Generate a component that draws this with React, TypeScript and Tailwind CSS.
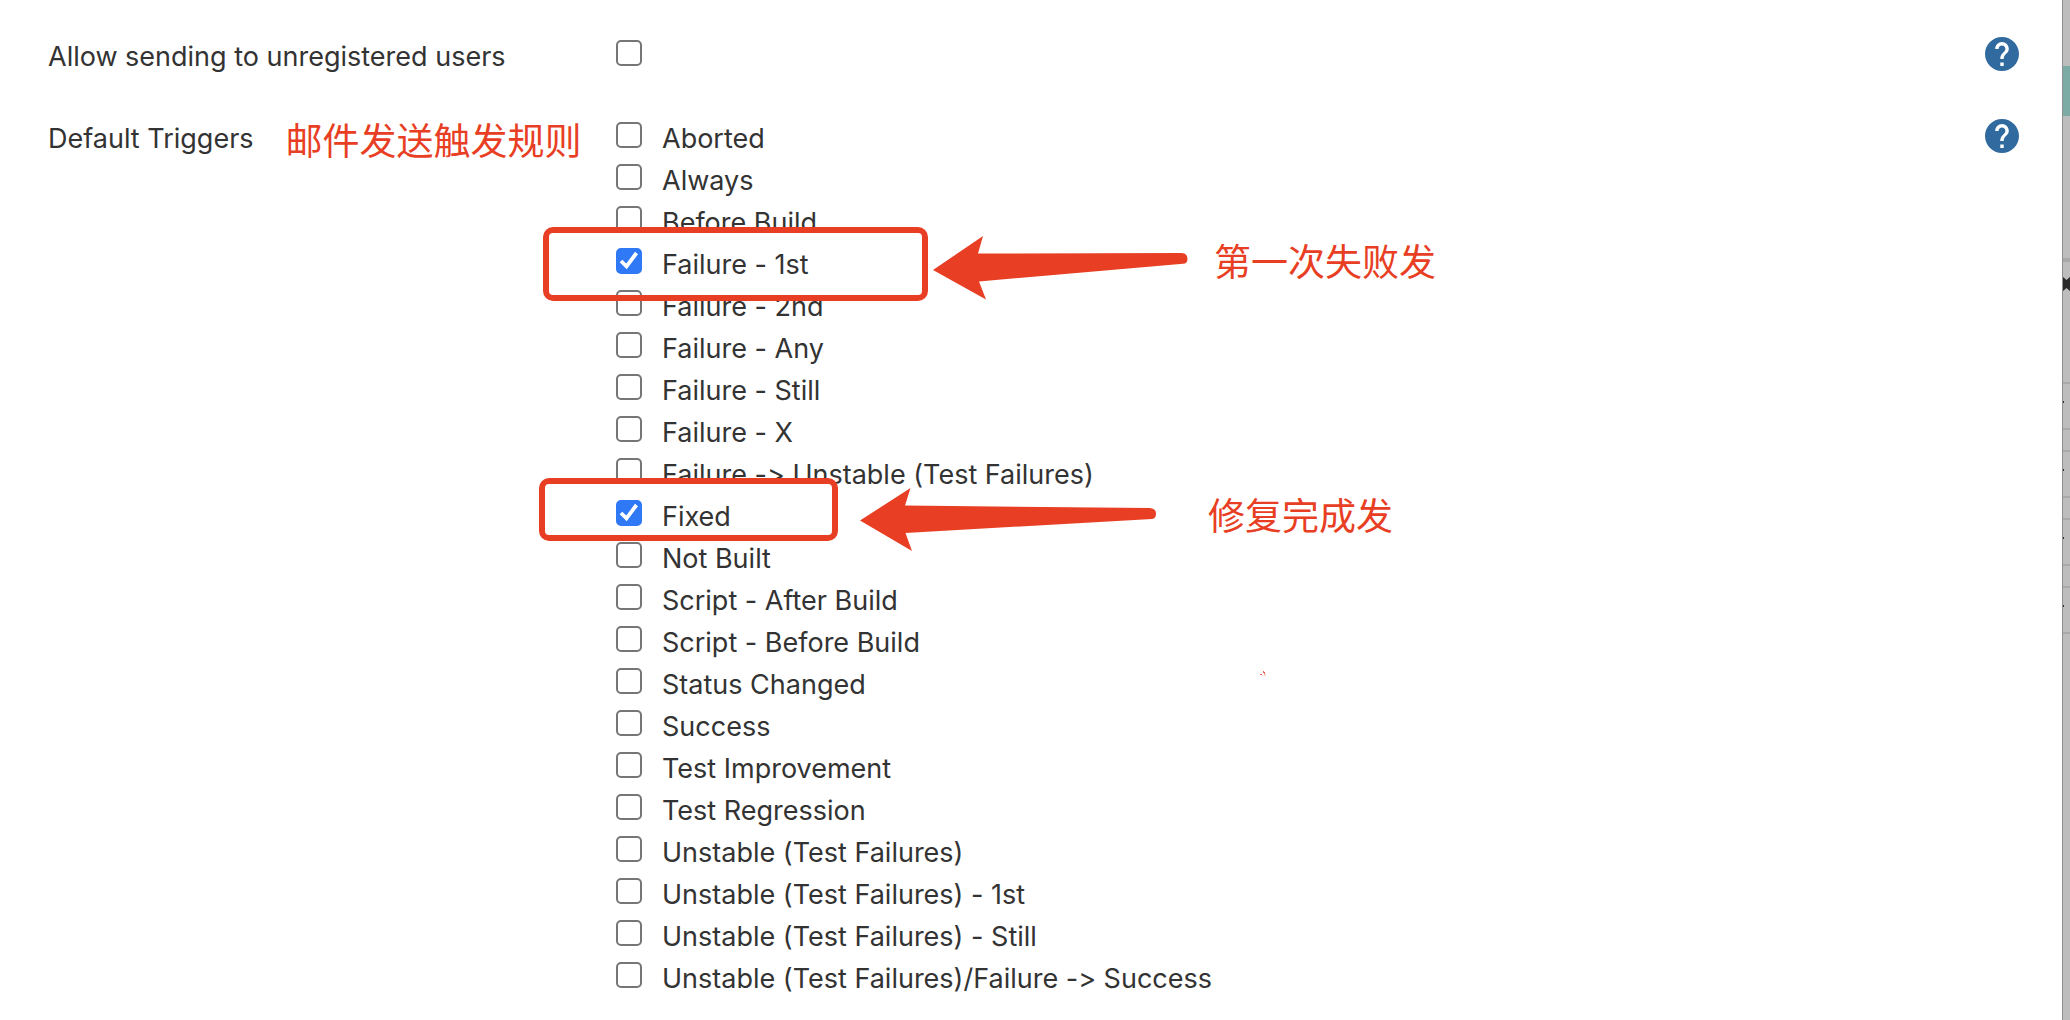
import React from "react";

type Callout = "first" | "fixed" | "speck";

const triggers: { name: string; checked?: boolean; callout?: Callout }[] = [
  { name: "Aborted" },
  { name: "Always" },
  { name: "Before Build" },
  { name: "Failure - 1st", checked: true, callout: "first" },
  { name: "Failure - 2nd" },
  { name: "Failure - Any" },
  { name: "Failure - Still" },
  { name: "Failure - X" },
  { name: "Failure -> Unstable (Test Failures)" },
  { name: "Fixed", checked: true, callout: "fixed" },
  { name: "Not Built" },
  { name: "Script - After Build" },
  { name: "Script - Before Build" },
  { name: "Status Changed", callout: "speck" },
  { name: "Success" },
  { name: "Test Improvement" },
  { name: "Test Regression" },
  { name: "Unstable (Test Failures)" },
  { name: "Unstable (Test Failures) - 1st" },
  { name: "Unstable (Test Failures) - Still" },
  { name: "Unstable (Test Failures)/Failure -> Success" },
];

const noteClass =
  "whitespace-nowrap font-['Noto_Sans_CJK_SC',sans-serif] text-[37px] leading-[42px] font-normal text-[#e83f24]";

function Checkbox({ id, checked }: { id: string; checked?: boolean }) {
  return (
    <span className="relative block size-[26px] shrink-0">
      <input
        id={id}
        type="checkbox"
        defaultChecked={checked}
        className="peer block size-[26px] appearance-none rounded-[5px] border-2 border-[#767676] bg-white checked:border-[#2f78f6] checked:bg-[#2f78f6]"
      />
      <svg
        viewBox="0 0 26 26"
        className="pointer-events-none absolute inset-0 hidden size-[26px] peer-checked:block"
        fill="none"
        stroke="#fff"
        strokeWidth="3.8"
      >
        <path d="M5 13 10.5 18.300 20.500 5" />
      </svg>
    </span>
  );
}

function HelpButton({ label }: { label: string }) {
  return (
    <button type="button" aria-label={label} className="block size-[34px] shrink-0">
      <svg viewBox="2 2 20 20" className="size-[34px]" fill="#306a9e">
        <path d="M12 2C6.48 2 2 6.48 2 12s4.48 10 10 10 10-4.48 10-10S17.52 2 12 2zm1 17h-2v-2h2v2zm2.07-7.75-.9.92C13.45 12.9 13 13.5 13 15h-2v-.5c0-1.1.45-2.1 1.17-2.83l1.24-1.26c.37-.36.59-.86.59-1.41 0-1.1-.9-2-2-2s-2 .9-2 2H8c0-2.21 1.79-4 4-4s4 1.79 4 4c0 .88-.36 1.68-.93 2.25z" />
      </svg>
    </button>
  );
}

function FirstFailureCallout() {
  return (
    <>
      <span className="pointer-events-none absolute -top-[21px] -left-[73px] z-10 h-[74px] w-[385px] rounded-[10px] border-6 border-[#e83f24]" />
      <svg
        viewBox="0 0 256 66"
        className="pointer-events-none absolute -top-[13px] left-[316px] z-10 h-[66px] w-[256px]"
        fill="#e83f24"
      >
        <path d="M1 35 51 1 46 18.500 249 18Q255.500 18 255.500 24 255.500 28.500 251 28.800L47 46.500 54 64.500Z" />
      </svg>
      <span className={"absolute -top-[9px] left-[598px] " + noteClass}>第一次失败发</span>
    </>
  );
}

function FixedCallout() {
  return (
    <>
      <span className="pointer-events-none absolute -top-[22px] -left-[77px] z-10 h-[63px] w-[299px] rounded-[10px] border-6 border-[#e83f24]" />
      <svg
        viewBox="0 0 298 66"
        className="pointer-events-none absolute -top-[13px] left-[243px] z-10 h-[66px] w-[298px]"
        fill="#e83f24"
      >
        <path d="M1 33.500 51.500 1 46 18.500 291 21Q297 21.500 297 26.500 297 31.500 293 32L46.500 46 53 64Z" />
      </svg>
      <span className={"absolute -top-[7px] left-[592px] " + noteClass}>修复完成发</span>
    </>
  );
}

function InkSpeck() {
  return (
    <svg
      viewBox="0 0 6 7"
      className="pointer-events-none absolute top-[2px] left-[644px] h-[7px] w-[6px]"
      fill="#e83f24"
      aria-hidden="true"
    >
      <path d="M0 4h2v1H0zM3 1h1v1h1v2H4V3H3z" opacity=".8" />
      <path d="M2 5h1v1H2zM4 4h2v2H4z" opacity=".25" />
    </svg>
  );
}

function BackdropStrip() {
  const line = "h-[2px] shrink-0 bg-[#a9a9a9]";
  return (
    <div
      aria-hidden="true"
      className="flex w-2 shrink-0 flex-col overflow-hidden border-l border-[#909090] bg-[#bdbdbd]"
    >
      <div className="mt-[66px] h-[50px] shrink-0 bg-[#7caaa4]" />
      <div className="mt-[142px] h-1 shrink-0 bg-[#a9a9a9]" />
      <svg viewBox="0 0 7 14" className="mt-[15px] h-[14px] w-[7px] shrink-0" fill="#2a2a2a">
        <path d="M0 0 3.500 3 7 0V14L3.500 11 0 14Z" />
      </svg>
      <div className="h-[91px] shrink-0" />
      {[0, 1, 2, 3].map((i) => (
        <div key={i} className="flex h-[68px] shrink-0 flex-col">
          <div className={line} />
          <div className="mt-[17px] h-[2px] w-px bg-[#333]" />
          <div className={"mt-[25px] " + line} />
        </div>
      ))}
    </div>
  );
}

export default function App() {
  return (
    <div className="flex min-h-screen overflow-hidden bg-white font-['Inter',sans-serif] text-[27px] leading-[42px] text-[#333] [font-variant-ligatures:none]">
      <main className="min-w-0 flex-1 pt-[37px] pr-[43px] pl-12">
        <div className="flex h-[82px] items-start">
          <label htmlFor="unregistered" className="-mt-px w-[568px] shrink-0 whitespace-nowrap">
            Allow sending to unregistered users
          </label>
          <div className="flex-1 pt-[3px]">
            <Checkbox id="unregistered" />
          </div>
          <HelpButton label="Help for unregistered users" />
        </div>
        <div className="flex items-start">
          <div className="-mt-px flex w-[568px] shrink-0 gap-8">
            <h2 className="whitespace-nowrap">Default Triggers</h2>
            <span className={noteClass}>邮件发送触发规则</span>
          </div>
          <ul className="flex-1 pt-[3px]">
            {triggers.map((t, i) => (
              <li key={t.name} className="relative flex h-[42px] items-start gap-5">
                <Checkbox id={"trigger-" + i} checked={t.checked} />
                <label htmlFor={"trigger-" + i} className="-mt-1 whitespace-nowrap">
                  {t.name}
                </label>
                {t.callout === "first" && <FirstFailureCallout />}
                {t.callout === "fixed" && <FixedCallout />}
                {t.callout === "speck" && <InkSpeck />}
              </li>
            ))}
          </ul>
          <HelpButton label="Help for default triggers" />
        </div>
      </main>
      <BackdropStrip />
    </div>
  );
}
